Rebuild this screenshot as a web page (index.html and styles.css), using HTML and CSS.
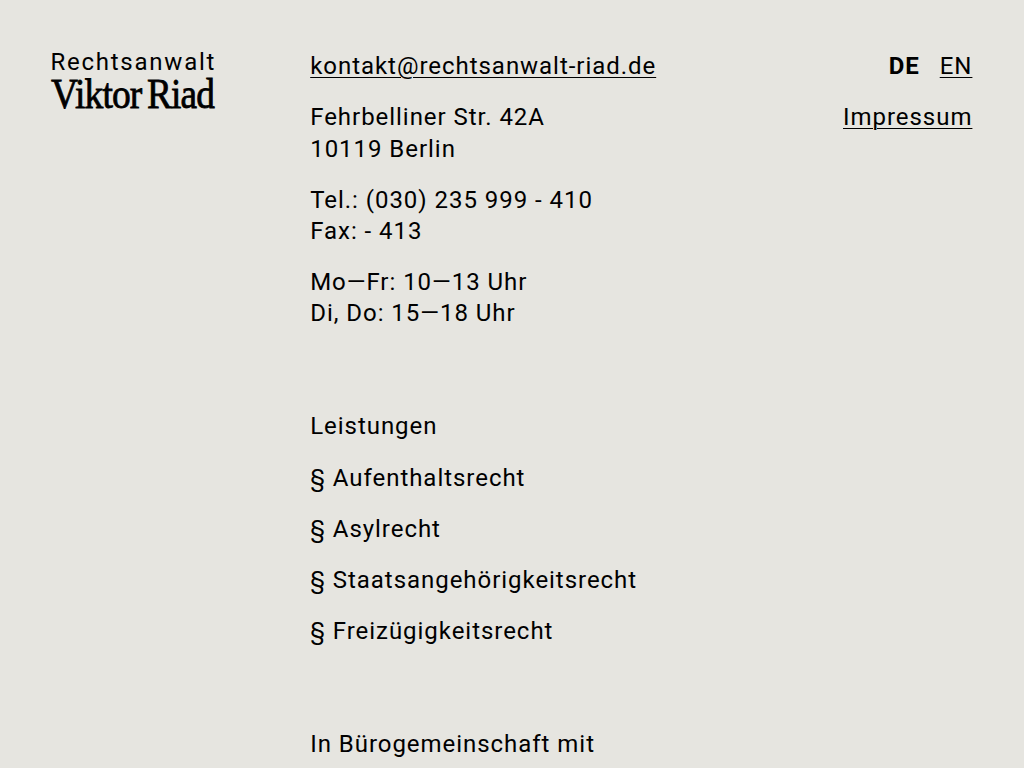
FILE: index.html
```html
<!DOCTYPE html>
<html lang="de">
<head>
    <meta charset="UTF-8">
    <meta name="viewport" content="width=device-width, initial-scale=1.0">
    <title>Rechtsanwalt Viktor Riad</title>
    <link rel="stylesheet" href="styles.css">
</head>
<body>
    <div class="page">
        <!-- Logo -->
        <header class="logo">
            <a href="index.html">
                <svg width="164" height="62" viewBox="0 0 164 62">
                    <text class="logo-top" x="-0.6" y="19" textLength="164">Rechtsanwalt</text>
                    <text class="logo-name" x="0" y="56.6" textLength="90.5" lengthAdjust="spacingAndGlyphs">Viktor</text>
                    <text class="logo-name" x="96" y="56.6" textLength="67" lengthAdjust="spacingAndGlyphs">Riad</text>
                </svg>
            </a>
        </header>

        <!-- Main Content -->
        <main class="content">
            <section class="contact">
                <p><a href="mailto:kontakt@rechtsanwalt-riad.de">kontakt@rechtsanwalt-riad.de</a></p>
                <p>Fehrbelliner Str. 42A<br>10119 Berlin</p>
                <p>Tel.: (030) 235 999 - 410<br>Fax: - 413</p>
                <p>Mo—Fr: 10—13 Uhr<br>Di, Do: 15—18 Uhr</p>
            </section>

            <section class="services">
                <p>Leistungen</p>
                <p>§ Aufenthaltsrecht</p>
                <p>§ Asylrecht</p>
                <p>§ Staatsangehörigkeitsrecht</p>
                <p>§ Freizügigkeitsrecht</p>
            </section>

            <section class="office">
                <p>In Bürogemeinschaft mit</p>
            </section>
        </main>

        <!-- Language and imprint -->
        <nav class="menu">
            <p class="languages"><strong>DE</strong><a href="en.html">EN</a></p>
            <p><a href="impressum.html">Impressum</a></p>
        </nav>
    </div>
</body>
</html>
```
FILE: styles.css
```css
/* General styles */
body {
    margin: 0;
    height: 100vh;
    overflow: hidden;
    background-color: #e6e5e0;
    color: #000;
    font-family: Roboto, sans-serif;
    font-size: 24px;
    line-height: 1.3;
    letter-spacing: 0.04em;
}

p {
    margin: 0 0 20px;
}

a {
    color: inherit;
    text-decoration: underline;
    text-decoration-thickness: 1px;
    text-underline-offset: 3px;
}

.page {
    display: grid;
    grid-template-columns: 259px 1fr auto;
    padding: 5vw 51.6px 0 5vw;
}

/* Logo styles */
.logo a,
.logo svg {
    display: block;
    overflow: visible;
}

.logo-top {
    font-size: 24px;
    letter-spacing: 0;
}

.logo-name {
    font-family: "Liberation Serif", serif;
    font-size: 43px;
    letter-spacing: -1px;
    stroke: #000;
    stroke-width: 0.8px;
}

/* Content styles */
.contact,
.services {
    margin-bottom: 8vw;
}

/* Menu styles */
.menu {
    text-align: right;
}

.languages {
    display: flex;
    justify-content: flex-end;
    gap: 20px;
}
```
